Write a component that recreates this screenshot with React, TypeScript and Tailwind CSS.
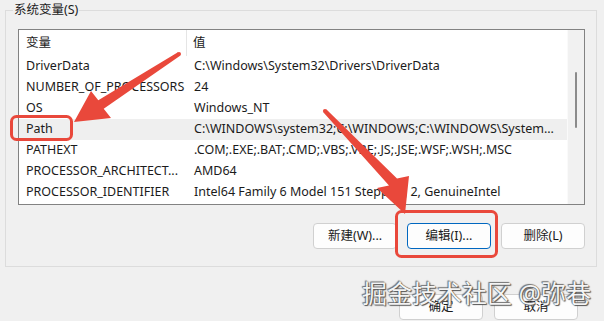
import React from 'react';

const rows: [string, string][] = [
  ['DriverData', 'C:\\Windows\\System32\\Drivers\\DriverData'],
  ['NUMBER_OF_PROCESSORS', '24'],
  ['OS', 'Windows_NT'],
  ['Path', 'C:\\WINDOWS\\system32;C:\\WINDOWS;C:\\WINDOWS\\System...'],
  ['PATHEXT', '.COM;.EXE;.BAT;.CMD;.VBS;.VBE;.JS;.JSE;.WSF;.WSH;.MSC'],
  ['PROCESSOR_ARCHITECT...', 'AMD64'],
  ['PROCESSOR_IDENTIFIER', 'Intel64 Family 6 Model 151 Stepping 2, GenuineIntel'],
];

const WinButton: React.FC<{ label: string; focused?: boolean }> = ({ label, focused }) => (
  <button
    className={
      'w-[84px] h-[26px] rounded-[4px] bg-[#fdfdfd] text-[12.5px] text-[#1b1b1b] flex items-center justify-center border ' +
      (focused ? 'border-[#0067c0]' : 'border-[#d0d0d0]')
    }
  >
    {label}
  </button>
);

export default function App() {
  return (
    <div className="relative w-[604px] h-[321px] overflow-hidden bg-[#f0f0f0] font-['Noto_Sans','Noto_Sans_CJK_SC',sans-serif] text-[#1b1b1b]">
      <fieldset className="ml-[5px] w-[592px] border border-[#dcdcdc] pl-[12px] pr-[11px] pb-[17px]">
        <legend className="ml-[-5px] px-[1px] text-[12.5px] leading-[20px]">系统变量(S)</legend>

        {/* list view */}
        <div className="mt-[9px] h-[176px] border border-[#828282] bg-white flex">
          <div className="flex-1 flex flex-col text-[12.5px]">
            <div className="h-[26px] flex items-center">
              <div className="w-[168px] h-full pl-[7px] flex items-center border-r border-[#e5e5e5]">变量</div>
              <div className="pl-[6px]">值</div>
            </div>
            {rows.map(([name, value]) => (
              <div
                key={name}
                className={'h-[21px] flex items-center whitespace-nowrap ' + (name === 'Path' ? 'bg-[#efefef]' : '')}
              >
                <div className="w-[168px] pl-[7px]">{name}</div>
                <div className="pl-[7px]">{value}</div>
              </div>
            ))}
          </div>
          {/* scrollbar */}
          <div className="w-[17px] bg-[#f1f1f1] border-l border-[#fafafa] pt-[42px] flex justify-center">
            <div className="w-[2px] h-[56px] rounded-full bg-[#8b8b8b]" />
          </div>
        </div>

        <div className="mt-[18px] flex justify-end gap-[10px]">
          <WinButton label="新建(W)..." />
          <WinButton label="编辑(I)..." focused />
          <WinButton label="删除(L)" />
        </div>
      </fieldset>

      <div className="mt-[27px] pr-[26px] flex justify-end gap-[11px]">
        <WinButton label="确定" />
        <WinButton label="取消" />
      </div>

      {/* annotations */}
      <svg className="absolute inset-0 pointer-events-none" width="604" height="321" viewBox="0 0 604 321">
        <rect x="11.5" y="116.5" width="60" height="23" rx="5" fill="none" stroke="#e9483b" strokeWidth="3" />
        <rect x="396.5" y="211.5" width="100" height="45" rx="5" fill="none" stroke="#e9483b" strokeWidth="3" />
        <polygon
          points="177.9,52.3 98.3,100.3 91,91 74,122 111,118 103.7,108.7 180.1,55.7"
          fill="#e9483b"
        />
        <circle cx="179" cy="54" r="2" fill="#e9483b" />
        <polygon
          points="326.5,109.5 397,178.5 409,176 405,214 377,188 389,185.5 323.5,112.5"
          fill="#e9483b"
        />
        <circle cx="325" cy="111" r="2.1" fill="#e9483b" />
      </svg>

      <div className="absolute left-[362px] top-[278px] text-[25px] leading-[30px] text-[#f4f4f4] whitespace-nowrap [text-shadow:0_0_1px_#444,1px_1px_1px_#555,-1px_-1px_1px_#777]">
        掘金技术社区 @弥巷
      </div>
    </div>
  );
}
